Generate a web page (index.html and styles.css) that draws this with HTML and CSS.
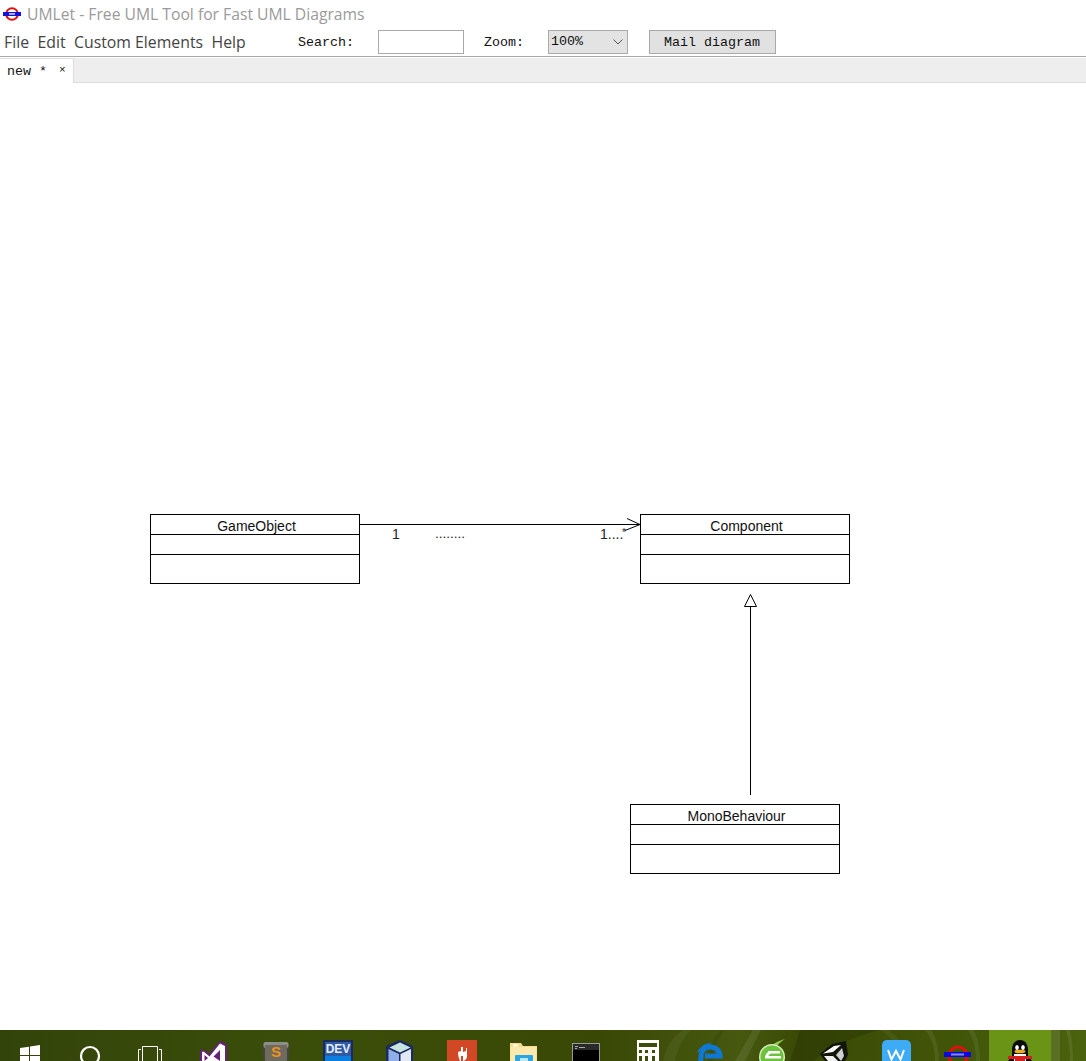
FILE: index.html
```html
<!DOCTYPE html>
<html lang="en">
<head>
<meta charset="utf-8">
<title>UMLet - Free UML Tool for Fast UML Diagrams</title>
<link rel="stylesheet" href="styles.css">
</head>
<body>
<div class="app">
  <header class="titlebar">
    <svg class="app-logo" viewBox="0 0 18 14" width="18" height="14" aria-hidden="true">
      <circle cx="9" cy="7" r="5.800" fill="#fff" stroke="#e01010" stroke-width="2"/>
      <rect x="0" y="5" width="18" height="4" fill="#1010e0"/>
      <rect x="6" y="6.300" width="6" height="1.300" fill="#fff"/>
    </svg>
    <span class="title-text">UMLet - Free UML Tool for Fast UML Diagrams</span>
  </header>
  <div class="toolbar">
    <nav class="menu">
      <span>File</span><span>Edit</span><span>Custom Elements</span><span>Help</span>
    </nav>
    <label class="mono search-label">Search:</label>
    <input class="search-input" type="text">
    <label class="mono zoom-label">Zoom:</label>
    <div class="zoom-select mono">
      <span>100%</span>
      <svg viewBox="0 0 10 6" width="10" height="6" aria-hidden="true"><path d="M.5 .5l4.500 4.500 4.500-4.500" fill="none" stroke="#555" stroke-width="1"/></svg>
    </div>
    <button class="mail-btn mono" type="button">Mail diagram</button>
  </div>
  <div class="tabstrip">
    <div class="tab mono"><span>new *</span><span class="tab-close">×</span></div>
  </div>
  <main class="canvas">
    <svg class="wires" width="1086" height="947" viewBox="0 83 1086 947" aria-hidden="true">
      <path d="M359 524.500H640M627 518.500L640 524.500L625 530.500" fill="none" stroke="#000" stroke-width="1"/>
      <path d="M750.500 795V606.500M750.500 594.500L756.500 606.500H744.500Z" fill="none" stroke="#000" stroke-width="1"/>
    </svg>
    <div class="uml-class game"><div class="uml-name">GameObject</div><div class="uml-sec"></div><div class="uml-sec last"></div></div>
    <div class="uml-class comp"><div class="uml-name">Component</div><div class="uml-sec"></div><div class="uml-sec last"></div></div>
    <div class="uml-class mono-b"><div class="uml-name">MonoBehaviour</div><div class="uml-sec"></div><div class="uml-sec last"></div></div>
    <span class="label l1">1</span>
    <span class="label l2">........</span>
    <span class="label l3">1....</span>
    <span class="label l4">*</span>
  </main>
  <footer class="taskbar">
    <svg class="tb-wallpaper" width="1086" height="31" viewBox="0 0 1086 31" aria-hidden="true">
      <path d="M663 31c2-14 10-24 20-31h8c-8 8-14 20-16 31z" fill="#fff" opacity=".05"/>
      <path d="M735 31l18-31h8l-16 31z" fill="#fff" opacity=".08"/>
      <path d="M720 0c-8 10-12 20-12 31h5c1-12 5-22 12-31z" fill="#000" opacity=".08"/>
      <path d="M800 0h80c-24 6-50 16-66 31h-24z" fill="#000" opacity=".14"/>
      <path d="M880 0c14 8 20 20 20 31h6c0-12-6-24-18-31z" fill="#fff" opacity=".05"/>
      <path d="M925 0c8 10 10 20 10 31h4c0-10-2-22-8-31zM968 0c6 10 8 20 8 31h4c0-12-2-22-6-31z" fill="#fff" opacity=".07"/>
      <path d="M1051 0h9v31h-9z" fill="#fff" opacity=".1"/>
      <path d="M1066 0c3 10 4 20 4 31h3c0-12-1-22-3-31z" fill="#fff" opacity=".08"/>
    </svg>
    <svg class="tb first" viewBox="0 0 59 31" aria-hidden="true">
      <path d="M20 18l9-1.300V25H20zM30 16.600L40 15V25H30zM20 26h9v5h-9zM30 26h10v5H30z" fill="#fff"/>
    </svg>
    <svg class="tb" viewBox="59 0 62 31" aria-hidden="true"><circle cx="90" cy="26" r="9" fill="none" stroke="#fff" stroke-width="2.200"/></svg>
    <svg class="tb" viewBox="121 0 62 31" aria-hidden="true"><path d="M142.500 16.500h15v15h-15zM141 19.500h-2.500V31M159 19.500h2.500V31" fill="none" stroke="#fff"/></svg>
    <svg class="tb" viewBox="183 0 62 31" aria-hidden="true">
      <path d="M220 11l7 3.500V31H200V20.500l3-1 6 4.500z" fill="#68217a"/>
      <path d="M220 13.500l5 2.500V31H202V22l1.500-.5 6 5z" fill="#fff"/>
      <path d="M204.500 25l3.500 3-3.500 3zM220 20l-6.500 6.500 6.500 4.500z" fill="#68217a"/>
    </svg>
    <svg class="tb" viewBox="245 0 62 31" aria-hidden="true">
      <rect x="263" y="12" width="26" height="19" rx="3" fill="#45453f"/>
      <rect x="263.500" y="12" width="25" height="6" rx="2" fill="#8e8e88"/>
      <rect x="265" y="15" width="22" height="16" rx="1" fill="#6e6a5e"/>
      <text x="276" y="27" class="ic-s">S</text>
    </svg>
    <svg class="tb" viewBox="307 0 62 31" aria-hidden="true">
      <rect x="323" y="10" width="30" height="21" rx="1" fill="#1b2a5a"/>
      <rect x="325" y="12" width="26" height="19" fill="#2f5aa6"/>
      <rect x="325" y="26" width="26" height="5" fill="#0a7fe0"/>
      <text x="338" y="23" class="ic-dev">DEV</text>
    </svg>
    <svg class="tb" viewBox="369 0 62 31" aria-hidden="true">
      <path d="M400 10l13 6v15h-27V16z" fill="#1d2a60"/>
      <path d="M400 12.500l10.500 5-10.500 5-10.500-5z" fill="#c8e4e0"/>
      <path d="M388.500 19l10.500 5v7h-10.500z" fill="#90aee8"/>
      <path d="M411 19l-10.500 5v7H411z" fill="#dfe8f4"/>
    </svg>
    <svg class="tb" viewBox="431 0 62 31" aria-hidden="true">
      <rect x="447" y="10" width="30" height="21" fill="#d24726"/>
      <path d="M458 22l3-1v-4h2v5l3-1v-3h1v8c0 3-2 5-5 5h-2c-1-2-2-5-2-9z" fill="#fff"/>
      <path d="M461 26h2v5h-2z" fill="#d24726"/>
    </svg>
    <svg class="tb" viewBox="493 0 62 31" aria-hidden="true">
      <path d="M510 13h11l2 3h14v15h-27z" fill="#f6dc8c"/>
      <rect x="510.500" y="17" width="26" height="14" fill="#fbe9ad"/>
      <rect x="513" y="14.500" width="5" height="2" fill="#fff"/>
      <rect x="515" y="25" width="18" height="6" rx="1" fill="#29a6e6"/>
      <rect x="520" y="28" width="8" height="3" fill="#bfe6f7"/>
    </svg>
    <svg class="tb" viewBox="555 0 62 31" aria-hidden="true">
      <rect x="572" y="13" width="28" height="18" fill="#9a9a9a"/>
      <rect x="573" y="14" width="26" height="6" fill="#2a2a2a"/>
      <rect x="573" y="20" width="26" height="11" fill="#000"/>
      <path d="M575 16.500h3M579 17.500h6M575 18.500h2" stroke="#ccc" stroke-width=".8"/>
    </svg>
    <svg class="tb" viewBox="617 0 62 31" aria-hidden="true">
      <path d="M637 10h22v21h-22zM639 13v4h18v-4zM639 20v3h3v-3zM645 20v3h3v-3zM652 20v3h3v-3zM639 26v5h3v-5zM645 26v5h3v-5zM652 26v5h3v-5z" fill="#fff" fill-rule="evenodd"/>
    </svg>
    <svg class="tb" viewBox="679 0 62 31" aria-hidden="true">
      <path d="M701 32c-1-9 2-15 9-15 6 0 10 4 10 9h-15" fill="none" stroke="#0f78d4" stroke-width="5"/>
      <path d="M698 22c3-5 8-8 13-8" fill="none" stroke="#0f78d4" stroke-width="1.500"/>
    </svg>
    <svg class="tb" viewBox="741 0 62 31" aria-hidden="true">
      <path d="M772 15c6-4 10-5 13-6-3 2-6 4-8 7z" fill="#8fd050"/>
      <circle cx="772" cy="27" r="13" fill="#d8ecc0"/>
      <circle cx="772" cy="27" r="11.500" fill="#6cc23a"/>
      <path d="M768 21h12v2.500h-12zM765 26h16v2.500h-16z" fill="#fff"/>
      <path d="M770 21a8 8 0 0 0-5 6h3a6 6 0 0 1 3-4z" fill="#fff"/>
    </svg>
    <svg class="tb" viewBox="803 0 62 31" aria-hidden="true">
      <path d="M820 24l12-10 14-3 2 14-3 6H825z" fill="#11150a"/>
      <path d="M823 23.500l11-7.500 7-1-8 7z" fill="#fff"/>
      <path d="M824 26h9l5 5h-10z" fill="#f0f0f0"/>
      <path d="M842 18l2 8-3 5-5-6z" fill="#cfcfcf"/>
    </svg>
    <svg class="tb" viewBox="865 0 62 31" aria-hidden="true">
      <path d="M882 31V15a5 5 0 0 1 5-5h19a5 5 0 0 1 5 5v16z" fill="#3fabf7"/>
      <path d="M888 20l3.500 9.500L896 21l4.500 8.500L904 20" fill="none" stroke="#fff" stroke-width="2"/>
    </svg>
    <svg class="tb" viewBox="927 0 62 31" aria-hidden="true">
      <circle cx="958" cy="26" r="9" fill="none" stroke="#e01010" stroke-width="3"/>
      <rect x="944" y="22" width="27" height="5" fill="#0a0ae0"/>
      <rect x="951" y="23.500" width="13" height="2" fill="#8888ee"/>
    </svg>
    <svg class="tb active" viewBox="989 0 62 31" aria-hidden="true">
      <path d="M1020 10c5 0 8 4 8 10v6l4 5h-24l4-5v-6c0-6 3-10 8-10z" fill="#0d0d0d"/>
      <ellipse cx="1017" cy="17.500" rx="1.800" ry="2.500" fill="#fff"/>
      <ellipse cx="1023" cy="17.500" rx="1.800" ry="2.500" fill="#fff"/>
      <ellipse cx="1020" cy="21.500" rx="5.500" ry="1.800" fill="#f2b01e"/>
      <rect x="1014" y="24" width="12" height="7" fill="#fff"/>
      <path d="M1008 26h24v3h-7v2h-10v-2h-7z" fill="#d81e1e"/>
    </svg>
  </footer>
</div>
</body>
</html>
```
FILE: styles.css
```css
* { box-sizing: border-box; }
html, body { margin: 0; height: 100%; }
body { background: #fff; overflow: hidden; font-family: "Open Sans", "Noto Sans", sans-serif; }
.app { display: flex; flex-direction: column; height: 1061px; width: 1086px; }
.mono { font-family: "Liberation Mono", "DejaVu Sans Mono", monospace; font-size: 13.33px; color: #111; }

.titlebar { height: 29px; display: flex; align-items: center; padding-left: 3px; gap: 6px; padding-bottom: 1px; }
.title-text { font-size: 15.700px; color: #9a9a9a; white-space: nowrap; }

.toolbar { height: 28px; display: flex; align-items: center; border-bottom: 1px solid #a9a9a9; padding-bottom: 2px; }
.menu { display: flex; gap: 8.500px; width: 298px; padding-left: 4px; font-size: 15.800px; color: #444; white-space: nowrap; }
.search-label { width: 80px; padding-top: 2px; }
.search-input { width: 86px; height: 24px; border: 1px solid #a9a9a9; background: #fff; padding: 0; margin: 0; }
.zoom-label { margin-left: 20px; width: 64px; padding-top: 2px; }
.zoom-select { width: 80px; height: 24px; border: 1px solid #a9a9a9; background: #e3e3e3; display: flex; align-items: center; justify-content: space-between; padding: 0 4px 0 2px; }
.mail-btn { margin-left: 21px; width: 127px; height: 24px; border: 1px solid #a9a9a9; background: #e1e1e1; padding: 2px 1px 0 0; }

.tabstrip { height: 26px; background: #eee; border-top: 1px solid #fff; border-bottom: 1px solid #dcdcdc; display: flex; align-items: flex-end; }
.tab { width: 74px; height: 25px; margin-bottom: -1px; background: #fff; border: 1px solid #dcdcdc; border-bottom: 0; border-left: 0; display: flex; align-items: center; padding-left: 7px; gap: 12px; }
.tab-close { font-size: 11px; position: relative; top: -1px; }

.canvas { position: relative; flex: 1; background: #fff; overflow: hidden; }
.wires { position: absolute; left: 0; top: 0; }
.uml-class { position: absolute; width: 210px; height: 70px; border: 1px solid #000; background: #fff; display: flex; flex-direction: column; font-family: "Liberation Sans", Arial, sans-serif; font-size: 14px; color: #111; }
.game { left: 150px; top: 431px; }
.comp { left: 640px; top: 431px; }
.mono-b { left: 630px; top: 721px; }
.uml-name { height: 20px; border-bottom: 1px solid #000; text-align: center; line-height: 23px; padding-left: 3px; }
.uml-sec { height: 20px; border-bottom: 1px solid #000; }
.uml-sec.last { flex: 1; border-bottom: 0; }
.label { position: absolute; font-family: "Liberation Sans", Arial, sans-serif; font-size: 14px; line-height: 16px; color: #222; }
.l1 { left: 392px; top: 443px; }
.l2 { left: 435px; top: 443px; font-size: 13.500px; }
.l3 { left: 600px; top: 443px; }
.l4 { left: 622px; top: 442px; font-size: 10px; }

.taskbar { position: relative; height: 31px; display: flex; overflow: hidden; background: linear-gradient(90deg, #33440a 0, #3a4e0a 300px, #3a4805 600px, #46590f 740px, #3a4a05 800px, #415508 950px, #4a620e 1086px); }
.tb-wallpaper { position: absolute; left: 0; top: 0; }
.tb { position: relative; display: block; width: 62px; height: 31px; flex: none; }
.tb.first { width: 59px; }
.tb.active { background: #6a9416; }
.ic-s { font-family: "Liberation Sans", sans-serif; font-weight: bold; font-size: 15px; fill: #f0901e; text-anchor: middle; }
.ic-dev { font-family: "Liberation Sans", sans-serif; font-weight: bold; font-size: 12px; fill: #e8eef8; text-anchor: middle; }
```
